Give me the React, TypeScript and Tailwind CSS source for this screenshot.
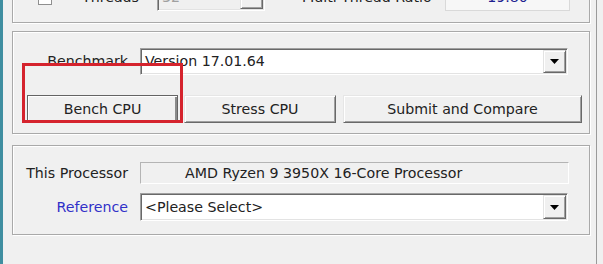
import React from "react";

const Arrow = () => (
  <svg width="9" height="5" viewBox="0 0 9 5">
    <polygon points="0,0 9,0 4.5,5" fill="#000" />
  </svg>
);

const DropButton = () => (
  <div className="flex h-full w-[23px] items-center justify-center border border-t-[#e3e3e3] border-l-[#e3e3e3] border-r-[#696969] border-b-[#696969] bg-[#f0f0f0] shadow-[inset_1px_1px_0_#fff,inset_-1px_-1px_0_#a0a0a0]">
    <Arrow />
  </div>
);

interface ICombo {
  value: string;
  width: string;
  disabled?: boolean;
}

const Combo = ({ value, width, disabled = false }: ICombo) => {
  return (
    <div
      className={`${width} flex h-[27px] items-stretch border border-t-[#a0a0a0] border-l-[#a0a0a0] border-r-white border-b-white p-[1px] shadow-[inset_1px_1px_0_#696969,inset_-1px_-1px_0_#e3e3e3] ${
        disabled ? "bg-[#f0f0f0] text-[#a0a0a0]" : "bg-white text-[#222]"
      }`}
    >
      <div className="flex flex-1 items-center pl-[3px]">{value}</div>
      <DropButton />
    </div>
  );
};

interface IButton {
  label: string;
  width: string;
  focused?: boolean;
}

const WinButton = ({ label, width, focused = false }: IButton) => {
  return (
    <div
      className={`${width} flex h-[28px] items-center justify-center border bg-[#f0f0f0] text-[#222] ${
        focused
          ? "border-[#646464] shadow-[inset_1px_1px_0_#fff,inset_-2px_-2px_0_#8a8a8a]"
          : "border-t-[#e6e6e6] border-l-[#e6e6e6] border-r-[#696969] border-b-[#696969] shadow-[inset_1px_1px_0_#fff,inset_-1px_-1px_0_#a0a0a0]"
      }`}
    >
      {label}
    </div>
  );
};

const group =
  "border border-[#a9a9a9] shadow-[inset_1px_1px_0_#fff,1px_1px_0_#fff]";

export default function App() {
  return (
    <div className="relative flex h-[264px] w-[603px] overflow-hidden bg-[#f0f0f0] font-['DejaVu_Sans',sans-serif] text-[14.2px] leading-none text-[#222]">
      <div className="w-[3px] bg-[#3f8ea0]" />

      <div className="flex w-[593px] flex-col pl-[9px] pr-[6px]">
        {/* threads group, mostly scrolled off */}
        <div className={`${group} -mt-[27px] flex h-[50px] items-center pb-[1px]`}>
          <div className="ml-[25px] h-[14px] w-[14px] border border-[#8f8f8f] bg-white" />
          <span className="ml-[30px] w-[75px]">Threads</span>
          <Combo value="32" width="w-[108px]" disabled />
          <span className="ml-[37px] w-[143px]">Multi Thread Ratio</span>
          <div className="flex h-[27px] w-[125px] items-center justify-center border border-[#d9d9d9] bg-[#f7f7f7] text-[#202090]">
            19.80
          </div>
        </div>

        {/* benchmark group */}
        <div className={`${group} mt-[8px] flex h-[103px] flex-col`}>
          <div className="mt-[16px] flex items-center">
            <span className="w-[115px] text-right">Benchmark</span>
            <Combo value="Version 17.01.64" width="ml-[12px] w-[428px]" />
          </div>
          <div className="mt-[20px] flex pl-[14px]">
            <WinButton label="Bench CPU" width="w-[151px]" focused />
            <WinButton label="Stress CPU" width="ml-[6px] w-[152px]" />
            <WinButton label="Submit and Compare" width="ml-[7px] w-[239px]" />
          </div>
        </div>

        {/* processor group */}
        <div className={`${group} mt-[11px] flex h-[90px] flex-col`}>
          <div className="mt-[16px] flex items-center">
            <span className="w-[115px] text-right">This Processor</span>
            <div className="ml-[12px] flex h-[22px] w-[429px] items-center border border-t-[#b4b4b4] border-l-[#b4b4b4] border-r-white border-b-white pl-[44px] text-[#222]">
              AMD Ryzen 9 3950X 16-Core Processor
            </div>
          </div>
          <div className="mt-[9px] flex items-center">
            <span className="w-[115px] text-right text-[#3030c8]">Reference</span>
            <Combo value="<Please Select>" width="ml-[12px] w-[428px] h-[28px]" />
          </div>
        </div>
      </div>

      <div className="w-[1px] bg-[#9a9a9a]" />
      <div className="flex-1" />

      <div className="absolute left-[22px] top-[63px] h-[60px] w-[161px] border-[3px] border-[#d5232d]" />
    </div>
  );
}
